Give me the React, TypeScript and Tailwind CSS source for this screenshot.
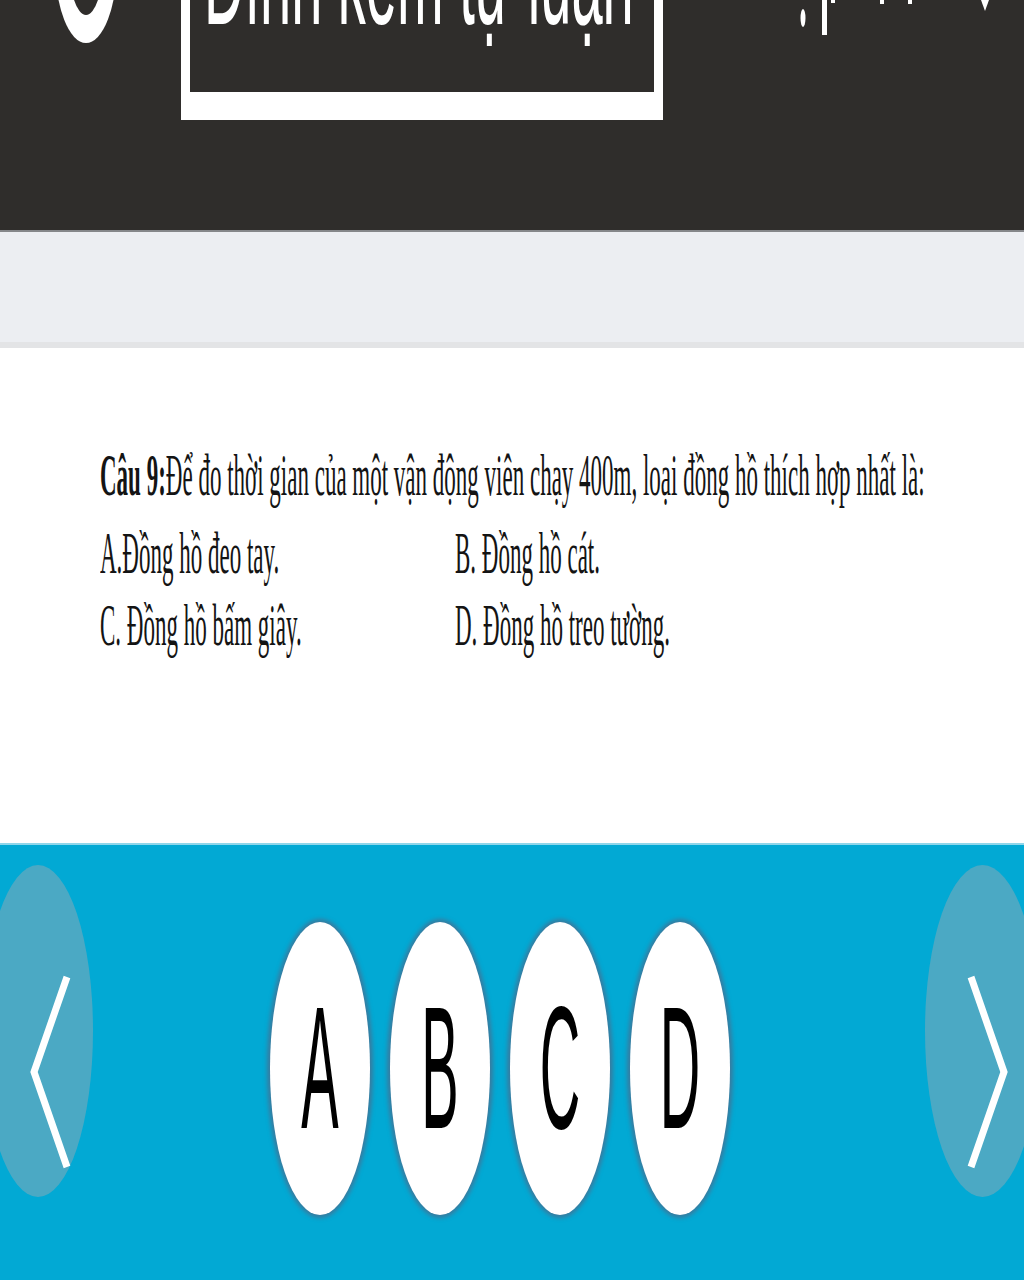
import React from 'react';

const answers = ['A', 'B', 'C', 'D'];

function Ring() {
    return (
        <svg width="64" height="44" viewBox="0 0 64 44" className="block">
            <ellipse cx="32" cy="-37" rx="31" ry="80" fill="#ffffff" />
            <ellipse cx="32" cy="-37" rx="17" ry="52" fill="#2f2d2b" />
        </svg>
    );
}

function TopRightMarks() {
    return (
        <svg width="210" height="40" viewBox="0 0 210 40" className="block">
            <ellipse cx="8" cy="18" rx="2.5" ry="9" fill="#ffffff" />
            <rect x="27" y="0" width="5" height="35" fill="#ffffff" />
            <rect x="36" y="0" width="4" height="3" fill="#ffffff" />
            <rect x="85" y="0" width="4" height="4" fill="#ffffff" />
            <rect x="113" y="0" width="4" height="4" fill="#ffffff" />
            <path d="M186 0 L190 11 L194 0 Z" fill="#ffffff" />
        </svg>
    );
}

function Header() {
    return (
        <header className="h-[232px] bg-[#2f2d2b] border-b-2 border-[#85878a] overflow-hidden flex items-start">
            <div className="ml-[54px]">
                <Ring />
            </div>
            <div className="ml-[63px] -mt-[200px] h-[320px] w-[482px] shrink-0 border-x-[9px] border-b-[28px] border-white bg-[#2f2d2b] flex flex-col justify-end pb-[45px] pl-[14px]">
                <div
                    className="text-[56px] leading-none text-white whitespace-nowrap origin-bottom scale-y-[2.6]"
                    style={{ fontFamily: '"Liberation Sans", Arial, sans-serif' }}
                >
                    Đính kèm tự luận
                </div>
            </div>
            <div className="ml-[132px]">
                <TopRightMarks />
            </div>
        </header>
    );
}

function Question() {
    return (
        <section className="h-[495px] bg-white pt-[92px] pl-[100px] overflow-hidden">
            <div className="h-[230px]">
                <div
                    className="origin-top scale-y-[2.6] text-[23px] leading-[28px] text-[#141414]"
                    style={{ fontFamily: '"Liberation Serif", "Times New Roman", serif' }}
                >
                    <p className="mb-[2px] whitespace-nowrap">
                        <span className="font-bold">Câu 9:</span>Để đo thời gian của một vận động viên chạy 400m, loại đồng hồ thích hợp nhất là:
                    </p>
                    <div className="grid grid-cols-[355px_1fr]">
                        <p>A.Đồng hồ đeo tay.</p>
                        <p>B. Đồng hồ cát.</p>
                        <p>C. Đồng hồ bấm giây.</p>
                        <p>D. Đồng hồ treo tường.</p>
                    </div>
                </div>
            </div>
        </section>
    );
}

function Chevron({ dir }: { dir: 'left' | 'right' }) {
    const d = dir === 'left' ? 'M39 4 L6 99 L39 194' : 'M6 4 L39 99 L6 194';
    return (
        <svg width="45" height="200" viewBox="0 0 45 200" className="block">
            <path d={d} fill="none" stroke="#ffffff" strokeWidth="7" strokeLinejoin="miter" />
        </svg>
    );
}

function AnswerBar() {
    return (
        <section className="h-[437px] bg-[#02a9d4] border-t-2 border-[#8fd6ea] overflow-hidden flex items-start">
            <button className="-ml-[17px] mt-[20px] w-[110px] h-[332px] shrink-0 rounded-[50%] bg-[#4ba9c4] flex items-center justify-end pr-[20px]">
                <span className="mt-[84px]">
                    <Chevron dir="left" />
                </span>
            </button>
            <div className="ml-[177px] mt-[77px] flex gap-[20px]">
                {answers.map((a) => (
                    <button
                        key={a}
                        className="w-[100px] h-[293px] rounded-[50%] bg-white shadow-[0_0_4px_3px_#3a7a9e] flex items-center justify-center"
                    >
                        <span
                            className="block text-[56px] leading-none text-black scale-y-[3.1]"
                            style={{ fontFamily: '"Liberation Sans", Arial, sans-serif' }}
                        >
                            {a}
                        </span>
                    </button>
                ))}
            </div>
            <button className="ml-auto -mr-[16px] mt-[20px] w-[115px] h-[332px] shrink-0 rounded-[50%] bg-[#4ba9c4] flex items-center justify-start pl-[40px]">
                <span className="mt-[84px]">
                    <Chevron dir="right" />
                </span>
            </button>
        </section>
    );
}

export default function App() {
    return (
        <div className="w-[1024px] h-[1280px] overflow-hidden bg-white">
            <Header />
            <div className="h-[116px] bg-[#eceef2] border-b-[6px] border-[#e3e4e6]" />
            <Question />
            <AnswerBar />
        </div>
    );
}
